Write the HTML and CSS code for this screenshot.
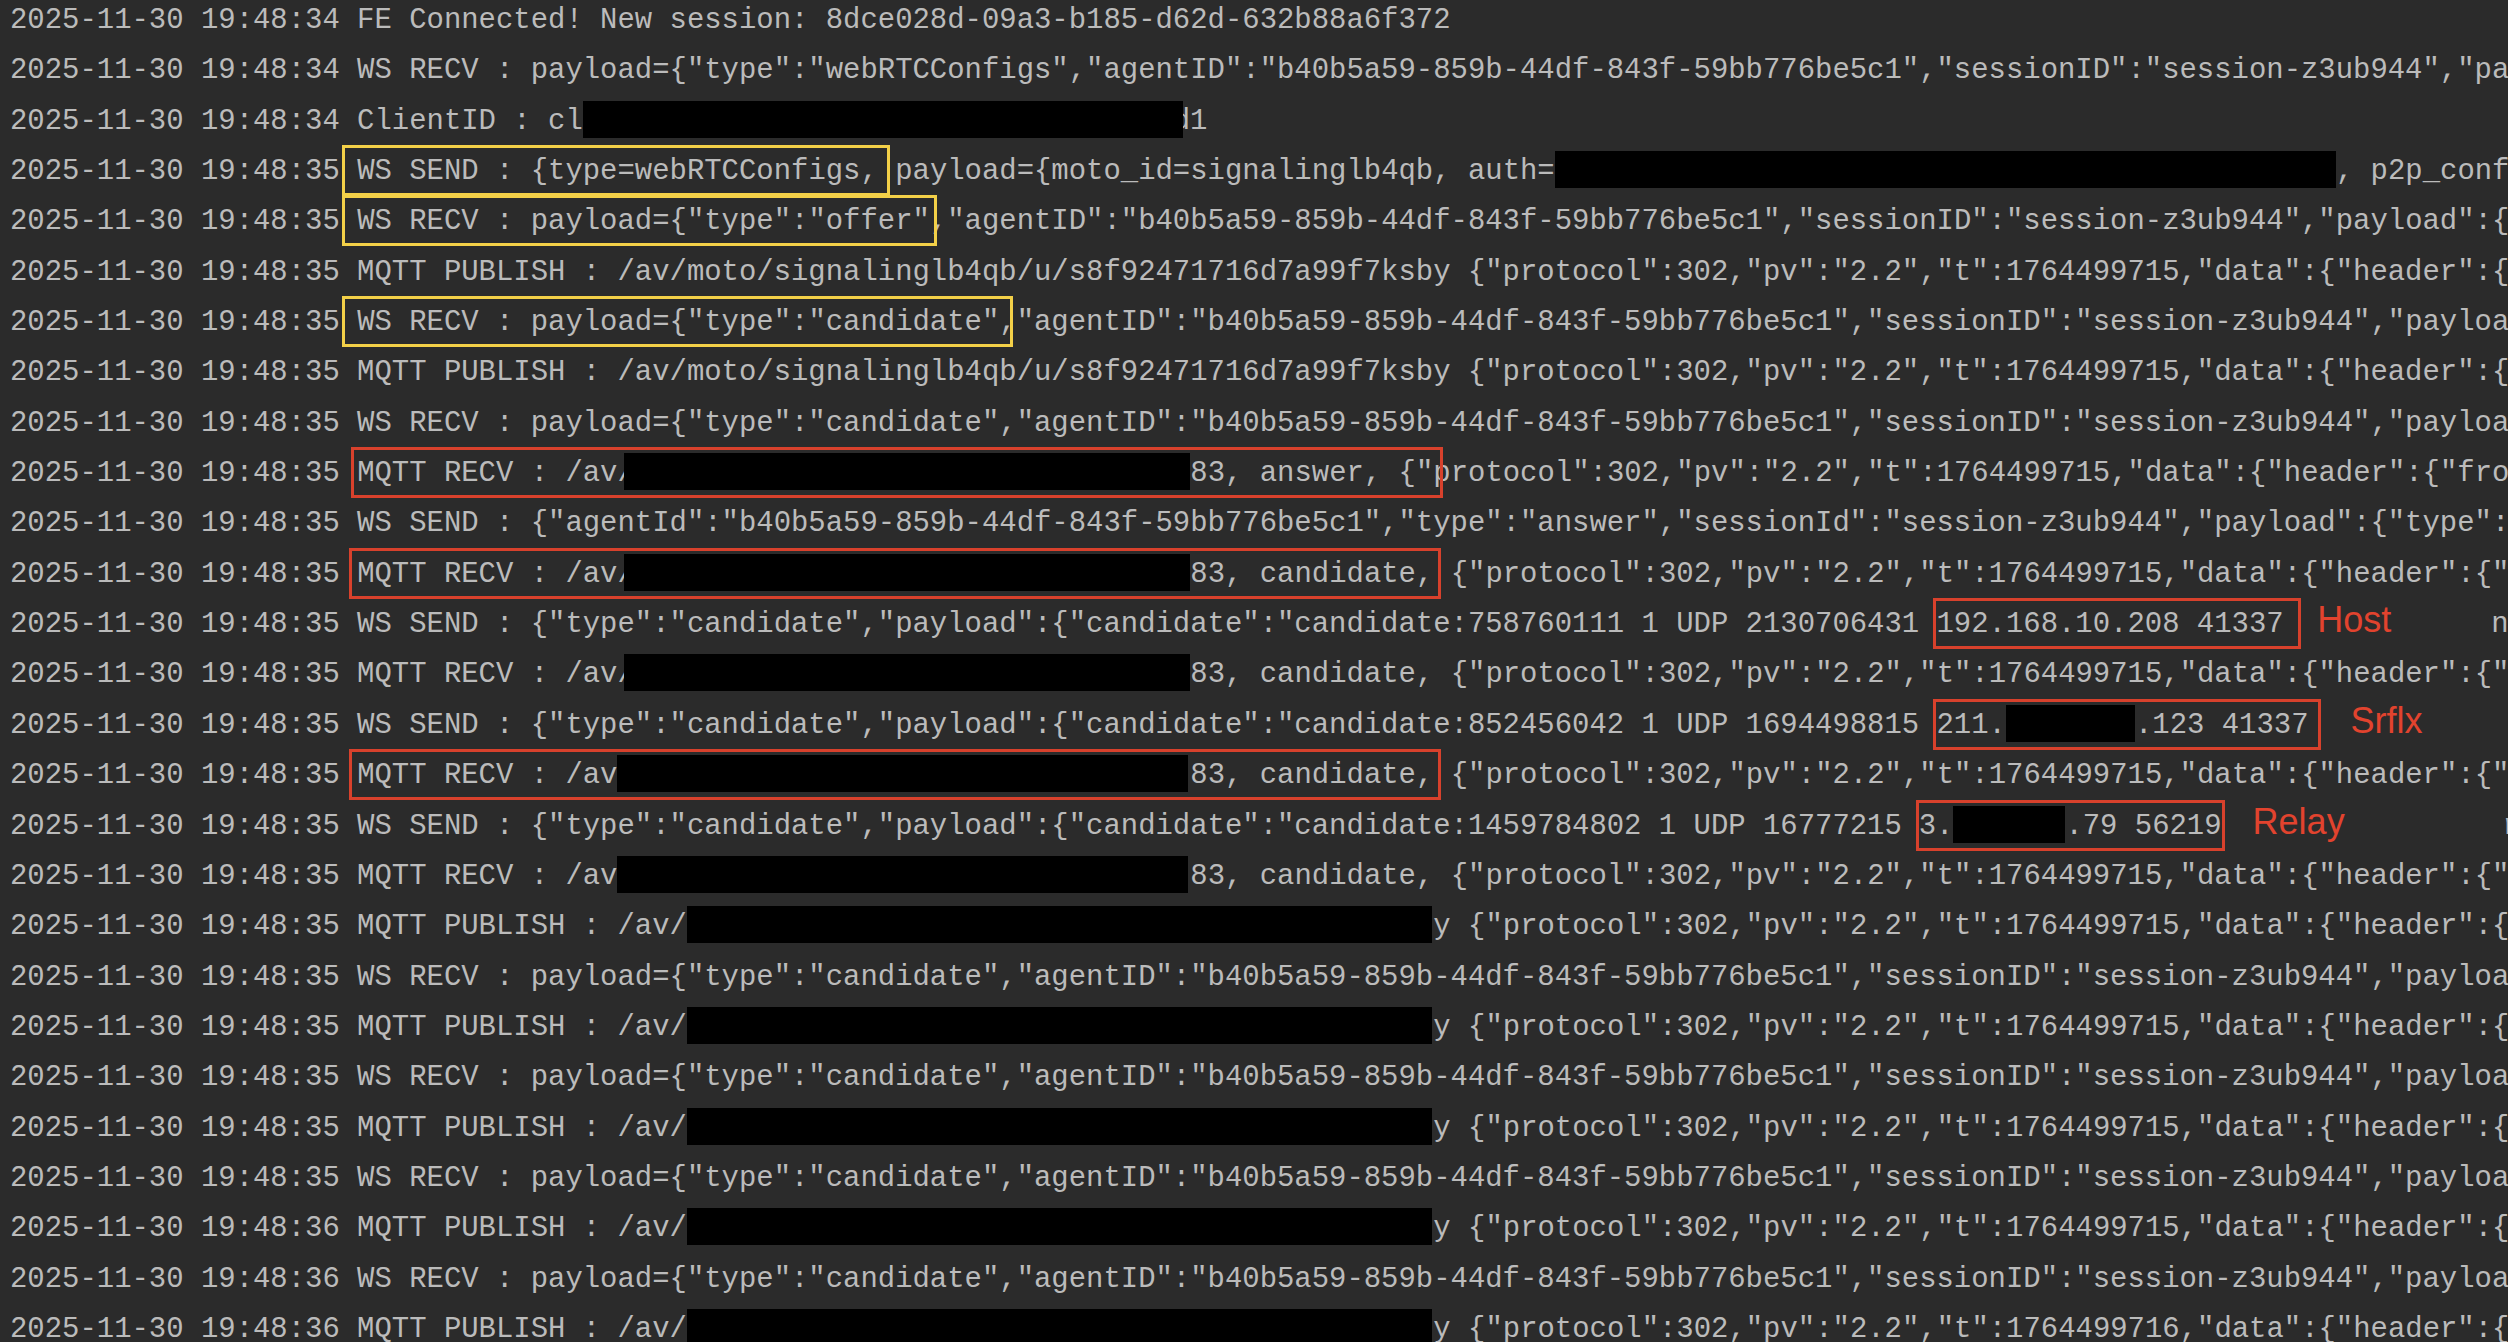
FILE: index.html
```html
<!DOCTYPE html>
<html lang="en">
<head>
  <meta charset="UTF-8">
  <title>Signaling log</title>
  <link rel="stylesheet" href="styles.css">
</head>
<body>

  <div class="console">
    <div class="line">2025-11-30 19:48:34 FE Connected! New session: 8dce028d-09a3-b185-d62d-632b88a6f372</div>
    <div class="line">2025-11-30 19:48:34 WS RECV : payload={"type":"webRTCConfigs","agentID":"b40b5a59-859b-44df-843f-59bb776be5c1","sessionID":"session-z3ub944","payload":{"moto_id":"signalinglb4qb"}}</div>
    <div class="line">2025-11-30 19:48:34 ClientID : cl<span class="redact client"></span>d1</div>
    <div class="line">2025-11-30 19:48:35 <span class="box yellow y1">WS SEND : {type=webRTCConfigs,</span> payload={moto_id=signalinglb4qb, auth=<span class="redact auth"></span>, p2p_configs={stun=[], turn=[]}}}</div>
    <div class="line">2025-11-30 19:48:35 <span class="box yellow y2">WS RECV : payload={"type":"offer"</span>,"agentID":"b40b5a59-859b-44df-843f-59bb776be5c1","sessionID":"session-z3ub944","payload":{"type":"offer","sdp":"v=0"}}</div>
    <div class="line">2025-11-30 19:48:35 MQTT PUBLISH : /av/moto/signalinglb4qb/u/s8f92471716d7a99f7ksby {"protocol":302,"pv":"2.2","t":1764499715,"data":{"header":{"from":"web"}}}</div>
    <div class="line">2025-11-30 19:48:35 <span class="box yellow y3">WS RECV : payload={"type":"candidate"</span>,"agentID":"b40b5a59-859b-44df-843f-59bb776be5c1","sessionID":"session-z3ub944","payload":{"candidate":""}}</div>
    <div class="line">2025-11-30 19:48:35 MQTT PUBLISH : /av/moto/signalinglb4qb/u/s8f92471716d7a99f7ksby {"protocol":302,"pv":"2.2","t":1764499715,"data":{"header":{"from":"web"}}}</div>
    <div class="line">2025-11-30 19:48:35 WS RECV : payload={"type":"candidate","agentID":"b40b5a59-859b-44df-843f-59bb776be5c1","sessionID":"session-z3ub944","payload":{"candidate":""}}</div>
    <div class="line">2025-11-30 19:48:35 <span class="box red r1">MQTT RECV : /av/<span class="redact topic"></span>83, answer, {"</span>protocol":302,"pv":"2.2","t":1764499715,"data":{"header":{"from":"dev"}}}</div>
    <div class="line">2025-11-30 19:48:35 WS SEND : {"agentId":"b40b5a59-859b-44df-843f-59bb776be5c1","type":"answer","sessionId":"session-z3ub944","payload":{"type":"answer","sdp":"v=0"}}</div>
    <div class="line">2025-11-30 19:48:35 <span class="box red r2">MQTT RECV : /av/<span class="redact topic"></span>83, candidate,</span> {"protocol":302,"pv":"2.2","t":1764499715,"data":{"header":{"from":"dev"}}}</div>
    <div class="line">2025-11-30 19:48:35 WS SEND : {"type":"candidate","payload":{"candidate":"candidate:758760111 1 UDP 2130706431 <span class="box red host">192.168.10.208 41337</span><span class="note host">Host</span>neration 0 ufrag"}}</div>
    <div class="line">2025-11-30 19:48:35 MQTT RECV : /av/<span class="redact topic"></span>83, candidate, {"protocol":302,"pv":"2.2","t":1764499715,"data":{"header":{"from":"dev"}}}</div>
    <div class="line">2025-11-30 19:48:35 WS SEND : {"type":"candidate","payload":{"candidate":"candidate:852456042 1 UDP 1694498815 <span class="box red srflx">211.<span class="redact ip2"></span>.123 41337</span><span class="note srflx">Srflx</span></div>
    <div class="line">2025-11-30 19:48:35 <span class="box red r2">MQTT RECV : /av<span class="redact topic2"></span>83, candidate,</span> {"protocol":302,"pv":"2.2","t":1764499715,"data":{"header":{"from":"dev"}}}</div>
    <div class="line">2025-11-30 19:48:35 WS SEND : {"type":"candidate","payload":{"candidate":"candidate:1459784802 1 UDP 16777215 <span class="box red relay">3.<span class="redact ip3"></span>.79 56219</span><span class="note relay">Relay</span>raddr 0.0.0.0</div>
    <div class="line">2025-11-30 19:48:35 MQTT RECV : /av<span class="redact topic2"></span>83, candidate, {"protocol":302,"pv":"2.2","t":1764499715,"data":{"header":{"from":"dev"}}}</div>
    <div class="line">2025-11-30 19:48:35 MQTT PUBLISH : /av/<span class="redact path"></span>y {"protocol":302,"pv":"2.2","t":1764499715,"data":{"header":{"from":"web"}}}</div>
    <div class="line">2025-11-30 19:48:35 WS RECV : payload={"type":"candidate","agentID":"b40b5a59-859b-44df-843f-59bb776be5c1","sessionID":"session-z3ub944","payload":{"candidate":""}}</div>
    <div class="line">2025-11-30 19:48:35 MQTT PUBLISH : /av/<span class="redact path"></span>y {"protocol":302,"pv":"2.2","t":1764499715,"data":{"header":{"from":"web"}}}</div>
    <div class="line">2025-11-30 19:48:35 WS RECV : payload={"type":"candidate","agentID":"b40b5a59-859b-44df-843f-59bb776be5c1","sessionID":"session-z3ub944","payload":{"candidate":""}}</div>
    <div class="line">2025-11-30 19:48:35 MQTT PUBLISH : /av/<span class="redact path"></span>y {"protocol":302,"pv":"2.2","t":1764499715,"data":{"header":{"from":"web"}}}</div>
    <div class="line">2025-11-30 19:48:35 WS RECV : payload={"type":"candidate","agentID":"b40b5a59-859b-44df-843f-59bb776be5c1","sessionID":"session-z3ub944","payload":{"candidate":""}}</div>
    <div class="line">2025-11-30 19:48:36 MQTT PUBLISH : /av/<span class="redact path"></span>y {"protocol":302,"pv":"2.2","t":1764499715,"data":{"header":{"from":"web"}}}</div>
    <div class="line">2025-11-30 19:48:36 WS RECV : payload={"type":"candidate","agentID":"b40b5a59-859b-44df-843f-59bb776be5c1","sessionID":"session-z3ub944","payload":{"candidate":""}}</div>
    <div class="line">2025-11-30 19:48:36 MQTT PUBLISH : /av/<span class="redact path"></span>y {"protocol":302,"pv":"2.2","t":1764499716,"data":{"header":{"from":"web"}}}</div>
  </div>

</body>
</html>
```

FILE: styles.css
```css
html, body {
  margin: 0;
  height: 100%;
  overflow: hidden;
  background: #2b2b2b;
}

/* Console output */
.console {
  --cw: 17.36px;
  margin-top: -4px;
  padding-left: 10px;
  font-family: "Liberation Mono", "DejaVu Sans Mono", monospace;
  font-size: 28.93px;
  color: #bbbbbb;
}

.line {
  height: 50.35px;
  line-height: 50.35px;
  white-space: pre;
}

/* Blacked out parts */
.redact {
  position: relative;
  display: inline-block;
  height: 37px;
  vertical-align: -9px;
  background: #000;
}

.redact.client {
  width: 600px;
  margin-right: -10px;
}

.redact.auth {
  width: calc(45 * var(--cw));
}

.redact.topic {
  margin-left: -11px;
  width: calc(32 * var(--cw) + 11px);
}

.redact.topic2 {
  width: calc(33 * var(--cw) - 2px);
  margin-right: 2px;
}

.redact.path {
  width: calc(43 * var(--cw) - 1px);
  margin-right: 1px;
}

.redact.ip2 {
  width: 129px;
}

.redact.ip3 {
  width: 112px;
}

/* Hand drawn highlight boxes */
.box {
  position: relative;
  border: 3px solid;
  padding-top: 7px;
  padding-bottom: 5px;
}

.box.yellow {
  border-color: #f3d048;
  margin-left: -15px;
  padding-left: 12px;
}

.box.red {
  border-color: #d8412c;
}

.y1 { margin-right: -12.5px; padding-right: 9.5px; }
.y2 { margin-right: -7.5px; padding-right: 4.5px; }
.y3 { margin-right: -14px; padding-right: 11px; }

.r1 { margin: 0 -10px 0 -6px; padding-left: 3px; padding-right: 7px; }
.r2 { margin: 0 -7.5px 0 -8.5px; padding-left: 5.5px; padding-right: 4.5px; }

.box.host { margin: 0 -17px 0 -4px; padding-left: 1px; padding-right: 14px; }
.box.srflx { margin: 0 -12px 0 -4px; padding-left: 1px; padding-right: 9px; }
.box.relay { margin: 0 -3px 0 -3.5px; padding-left: 0; padding-right: 0; }

/* Red labels next to the candidates */
.note {
  display: inline-block;
  font-family: "Liberation Sans", Arial, sans-serif;
  font-size: 36px;
  line-height: 1;
  color: #e2432e;
}

.note.host { margin-left: 33.5px; width: 174px; }
.note.srflx { margin-left: 42px; }
.note.relay { margin-left: 31px; width: 250px; }
```
